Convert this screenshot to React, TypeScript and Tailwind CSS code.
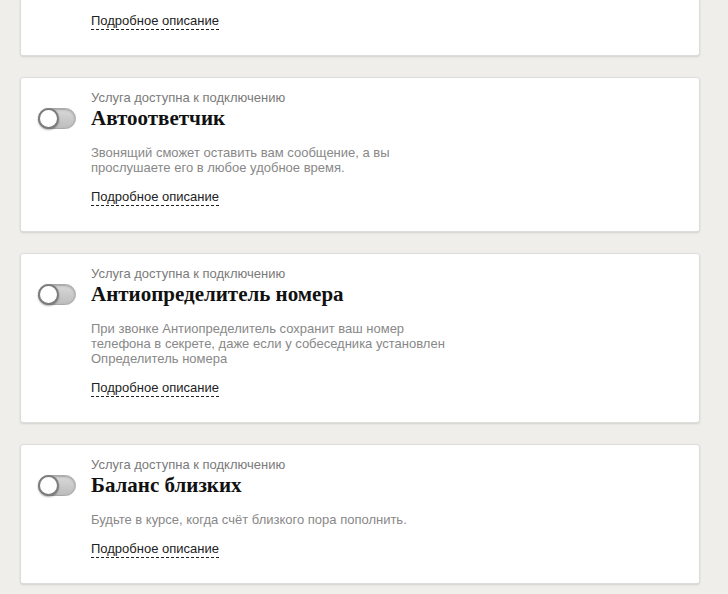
import React from "react";

const Toggle = () => (
  <div className="relative h-[21px] w-[38px] rounded-full border border-[#a9a9a9] bg-gradient-to-b from-[#d9d9d9] to-[#bdbdbd] shadow-[inset_0_1px_2px_rgba(0,0,0,0.25)]">
    <div className="absolute left-[-1px] top-[-1px] h-[21px] w-[21px] rounded-full border-2 border-[#7d7d7d] bg-white shadow-[0_1px_2px_rgba(0,0,0,0.35)]" />
  </div>
);

const Link = () => (
  <div className="text-[13px] leading-[15px]">
    <span className="border-b border-dashed border-[#222] pb-[1px] text-[#222]">Подробное описание</span>
  </div>
);

type Service = { title: string; desc: string[] };

const services: Service[] = [
  {
    title: "Автоответчик",
    desc: ["Звонящий сможет оставить вам сообщение, а вы", "прослушаете его в любое удобное время."],
  },
  {
    title: "Антиопределитель номера",
    desc: [
      "При звонке Антиопределитель сохранит ваш номер",
      "телефона в секрете, даже если у собеседника установлен",
      "Определитель номера",
    ],
  },
  {
    title: "Баланс близких",
    desc: ["Будьте в курсе, когда счёт близкого пора пополнить."],
  },
];

const Card = ({ s }: { s: Service }) => (
  <div className="rounded-[3px] border border-[#dcdcda] bg-white pb-[27px] pt-[13px] shadow-[0_1px_2px_rgba(0,0,0,0.12)]">
    <div className="grid grid-cols-[38px_1fr] gap-x-[15px] pl-[17px]">
      <div />
      <div className="text-[13px] leading-[14px] text-[#7a7a7a]">Услуга доступна к подключению</div>
      <div className="flex items-center">
        <Toggle />
      </div>
      <div
        className="text-[21px] font-bold leading-[26px] text-[#111]"
        style={{ fontFamily: '"Liberation Serif", "DejaVu Serif", serif' }}
      >
        {s.title}
      </div>
      <div />
      <div className="mt-[14px] text-[13px] leading-[15px] text-[#888]">
        {s.desc.map((d, i) => (
          <div key={i}>{d}</div>
        ))}
      </div>
      <div />
      <div className="mt-[14px]">
        <Link />
      </div>
    </div>
  </div>
);

export default function App() {
  return (
    <div
      className="h-[594px] w-[728px] overflow-hidden bg-[#efeeeb] pl-[20px] pr-[28px]"
      style={{ fontFamily: '"Liberation Sans", Arial, sans-serif' }}
    >
      <div className="flex flex-col gap-[21px]">
        <div className="rounded-b-[3px] border-x border-b border-[#dcdcda] bg-white pb-[27px] pl-[70px] pt-[13px] shadow-[0_1px_2px_rgba(0,0,0,0.12)]">
          <Link />
        </div>
        {services.map((s) => (
          <Card key={s.title} s={s} />
        ))}
      </div>
    </div>
  );
}
